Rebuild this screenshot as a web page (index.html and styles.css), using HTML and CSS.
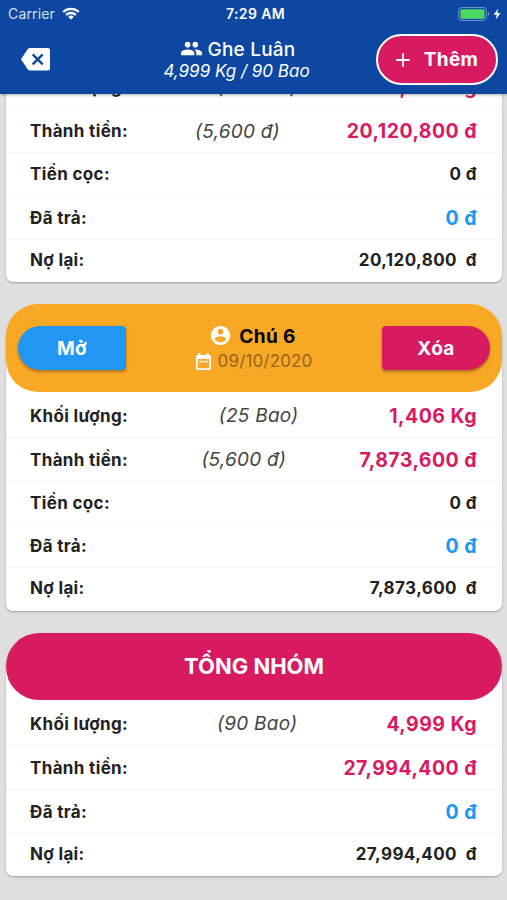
FILE: index.html
```html
<!DOCTYPE html>
<html lang="vi">
<head>
<meta charset="utf-8">
<title>Ghe Luân</title>
<link rel="stylesheet" href="styles.css">
</head>
<body>
<header class="top">
  <div class="status">
    <div class="carrier"><span>Carrier</span>
      <svg width="18" height="13" viewBox="0 0 18 13" fill="none" stroke="#fff" stroke-width="2.3"><path d="M1.2 5a11.2 11.2 0 0 1 15.6 0M4.1 8a7 7 0 0 1 9.8 0"/><path d="M9 12.6L6.2 9.9a4 4 0 0 1 5.6 0z" fill="#fff" stroke="none"/></svg>
    </div>
    <div class="clock">7:29 AM</div>
    <div class="power">
      <svg width="44" height="14" viewBox="0 0 44 14"><rect x=".7" y=".6" width="27.6" height="12.8" rx="3" fill="none" stroke="#7f9bcb" stroke-width="1"/><rect x="2.4" y="2.3" width="24.2" height="9.4" rx="1.5" fill="#4cd964"/><path d="M29.8 5c1.7.5 1.7 3.5 0 4z" fill="#7f9bcb"/><path d="M40.3 1.500L35.500 7.800h3.200l-1.200 4.900 5-6.600h-3.200z" fill="#fff"/></svg>
    </div>
  </div>
  <div class="bar">
    <svg class="back" width="29" height="23" viewBox="0 0 29 23"><path d="M9 0h18a2 2 0 0 1 2 2v18.500a2 2 0 0 1-2 2H9a3 3 0 0 1-2.400-1.300L0 11.300 6.600 1.300A3 3 0 0 1 9 0z" fill="#fff"/><path d="M11.700 6.300l10 10m0-10l-10 10" stroke="#0d47a1" stroke-width="2.400"/></svg>
    <div class="title">
      <div class="name"><svg width="23" height="23" viewBox="0 0 24 24" fill="#fff"><path d="M16 11c1.660 0 2.990-1.340 2.990-3S17.660 5 16 5s-3 1.340-3 3 1.340 3 3 3zm-8 0c1.660 0 2.990-1.340 2.990-3S9.660 5 8 5 5 6.340 5 8s1.340 3 3 3zm0 2c-2.330 0-7 1.170-7 3.500V19h14v-2.500c0-2.330-4.670-3.500-7-3.500zm8 0c-.29 0-.62.02-.97.050 1.160.84 1.970 1.970 1.970 3.450V19h6v-2.500c0-2.330-4.670-3.500-7-3.500z"/></svg><span>Ghe Luân</span></div>
      <div class="sum">4,999 Kg / 90 Bao</div>
    </div>
    <button class="add"><svg width="14" height="14" viewBox="0 0 14 14" stroke="#fff" stroke-width="1.800"><path d="M7 .3v13.400M.3 7h13.400"/></svg><span>Thêm</span></button>
  </div>
</header>
<main class="list">
  <section class="card first">
    <div class="row"><b>Khối lượng:</b><i>(65 Bao)</i><strong>3,593 Kg</strong></div>
    <div class="row"><b>Thành tiền:</b><i>(5,600 đ)</i><strong>20,120,800 đ</strong></div>
    <div class="row low"><b>Tiền cọc:</b><em>0 đ</em></div>
    <div class="row"><b>Đã trả:</b><strong class="paid">0 đ</strong></div>
    <div class="row low"><b>Nợ lại:</b><em>20,120,800&nbsp; đ</em></div>
  </section>
  <section class="card">
    <div class="head person">
      <button class="open">Mở</button>
      <div class="who">
        <div class="who-name"><svg width="23" height="23" viewBox="0 0 24 24" fill="#fff"><path d="M12 2C6.480 2 2 6.480 2 12s4.480 10 10 10 10-4.480 10-10S17.520 2 12 2zm0 3c1.660 0 3 1.340 3 3s-1.340 3-3 3-3-1.340-3-3 1.340-3 3-3zm0 14.200c-2.500 0-4.710-1.280-6-3.220.03-1.990 4-3.080 6-3.080 1.990 0 5.970 1.090 6 3.080-1.290 1.940-3.500 3.220-6 3.220z"/></svg><span>Chú 6</span></div>
        <div class="date"><svg width="15" height="17" viewBox="0 0 15 17"><path fill="#fff" fill-rule="evenodd" d="M2.300 0h2v2h6.400V0h2v2h.8A1.500 1.500 0 0 1 15 3.500v12a1.500 1.500 0 0 1-1.500 1.500h-12A1.500 1.500 0 0 1 0 15.500v-12A1.500 1.500 0 0 1 1.500 2h.8zM1.700 6v9.300h11.600V6z"/><path d="M3.300 8.600h8.600" stroke="#fff" stroke-width="1.600" stroke-dasharray="2.200 1"/></svg><span>09/10/2020</span></div>
      </div>
      <button class="delete">Xóa</button>
    </div>
    <div class="row tall"><b>Khối lượng:</b><i>(25 Bao)</i><strong>1,406 Kg</strong></div>
    <div class="row"><b>Thành tiền:</b><i>(5,600 đ)</i><strong>7,873,600 đ</strong></div>
    <div class="row low"><b>Tiền cọc:</b><em>0 đ</em></div>
    <div class="row"><b>Đã trả:</b><strong class="paid">0 đ</strong></div>
    <div class="row low"><b>Nợ lại:</b><em>7,873,600&nbsp; đ</em></div>
  </section>
  <section class="card">
    <div class="head total">TỔNG NHÓM</div>
    <div class="row tall"><b>Khối lượng:</b><i>(90 Bao)</i><strong>4,999 Kg</strong></div>
    <div class="row"><b>Thành tiền:</b><strong>27,994,400 đ</strong></div>
    <div class="row"><b>Đã trả:</b><strong class="paid">0 đ</strong></div>
    <div class="row low"><b>Nợ lại:</b><em>27,994,400&nbsp; đ</em></div>
  </section>
</main>
</body>
</html>
```
FILE: styles.css
```css
* { box-sizing: border-box; }
body {
  margin: 0;
  height: 900px;
  overflow: hidden;
  display: flex;
  flex-direction: column;
  background: #dfdfdf;
  color: #222;
  font-family: Inter, "Noto Sans", sans-serif;
}
svg { display: block; flex: none; }
button {
  border: 0;
  padding: 2px 0 0;
  color: #fff;
  font: 650 19px Inter, "Noto Sans", sans-serif;
  letter-spacing: .3px;
}
.top {
  position: relative;
  z-index: 1;
  height: 94px;
  flex: none;
  background: #0d47a1;
  color: #fff;
  box-shadow: 0 1px 3px rgba(0, 0, 0, .3);
}
.status {
  display: grid;
  grid-template-columns: 1fr auto 1fr;
  align-items: center;
  height: 27px;
  padding: 0 5px 0 8px;
  font-size: 14px;
}
.carrier { display: flex; align-items: center; gap: 7px; color: #d7e1f2; letter-spacing: .15px; }
.clock { font-weight: 600; letter-spacing: .4px; padding-left: 1px; }
.power { display: flex; justify-content: flex-end; }
.bar {
  display: grid;
  grid-template-columns: 88px 1fr 122px;
  align-items: center;
  height: 65px;
  padding: 0 9px;
}
.back { margin-left: 12px; }
.title { text-align: center; }
.name {
  display: flex;
  justify-content: center;
  gap: 5px;
  align-items: center;
  height: 22px;
  padding-left: 2px;
  font-size: 19px;
  font-weight: 500;
  letter-spacing: .2px;
}
.name span { padding-top: 1px; }
.sum { font-size: 17px; font-style: italic; line-height: 22px; white-space: nowrap; }
.add {
  display: flex;
  align-items: center;
  justify-content: center;
  gap: 14px;
  width: 122px;
  height: 51px;
  padding: 0;
  border: 2px solid #fff;
  border-radius: 26px;
  background: #d81b60;
}
.list { flex: 1; min-height: 0; overflow: hidden; padding: 0 5px 0 6px; }
.card {
  margin-bottom: 22px;
  border-radius: 32px 32px 7px 7px;
  background: #fff;
  box-shadow: 0 1px 2px rgba(0, 0, 0, .3);
}
.card.first { margin-top: -29px; border-radius: 0 0 7px 7px; }
.row {
  display: flex;
  justify-content: space-between;
  align-items: center;
  height: 44px;
  padding: 1px 25px 0 24px;
  border-bottom: 1px solid #f4f4f4;
  white-space: nowrap;
}
.row.low { height: 42.5px; }
.row.tall { height: 46px; padding-top: 3px; }
.row:last-child { border-bottom: 0; padding-bottom: 3px; }
b { font-size: 17px; font-weight: 650; letter-spacing: .35px; }
i { font-size: 19px; color: #444; letter-spacing: .25px; }
strong { font-size: 19.500px; font-weight: 650; color: #d81b60; letter-spacing: .45px; }
strong.paid { color: #2196f3; }
em { font-size: 17px; font-style: normal; font-weight: 650; letter-spacing: .42px; }
.head { display: flex; align-items: center; }
.person {
  justify-content: space-between;
  height: 87.500px;
  padding: 0 12px;
  border-radius: 32px;
  background: #f9a825;
}
.open, .delete { width: 108px; height: 44px; box-shadow: 0 2px 3px rgba(0, 0, 0, .3); }
.open { border-radius: 22px 4px 4px 22px; background: #2196f3; }
.delete { border-radius: 4px 22px 22px 4px; background: #d81b60; }
.who { padding-top: 1px; }
.who-name, .date { display: flex; align-items: center; justify-content: center; }
.who-name { gap: 7px; height: 26px; color: #000; font-size: 19px; font-weight: 650; letter-spacing: .4px; padding-right: 3px; }
.who-name span { padding-top: 2px; }
.date { gap: 7px; height: 26px; color: #95651a; font-size: 17px; letter-spacing: .15px; }
.total {
  justify-content: center;
  height: 67px;
  border-radius: 33px;
  background: #d81b60;
  color: #fff;
  font-size: 22px;
  font-weight: 650;
  letter-spacing: 0;
}
```
